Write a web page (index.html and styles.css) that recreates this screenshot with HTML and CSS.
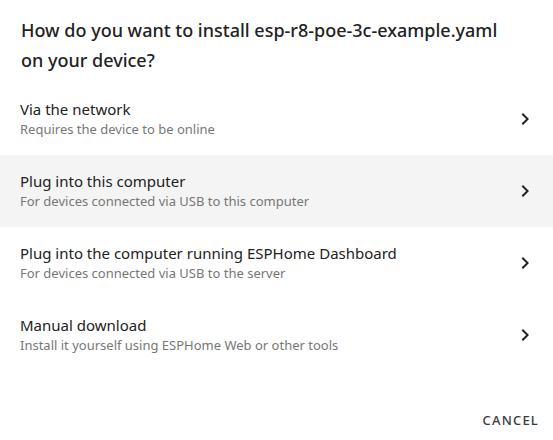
FILE: index.html
```html
<!DOCTYPE html>
<html>
<head>
<meta charset="utf-8">
<link rel="stylesheet" href="styles.css">
</head>
<body>
<div class="dialog">
  <h2 class="title">How do you want to install esp-r8-poe-3c-example.yaml on your device?</h2>
  <ul class="list">
    <li class="item">
      <div class="text">
        <span class="primary">Via the network</span>
        <span class="secondary">Requires the device to be online</span>
      </div>
      <svg class="chev" viewBox="0 0 24 24" width="24" height="24"><path d="M10 6L8.59 7.41 13.17 12l-4.58 4.59L10 18l6-6z"/></svg>
    </li>
    <li class="item hover">
      <div class="text">
        <span class="primary">Plug into this computer</span>
        <span class="secondary">For devices connected via USB to this computer</span>
      </div>
      <svg class="chev" viewBox="0 0 24 24" width="24" height="24"><path d="M10 6L8.59 7.41 13.17 12l-4.58 4.59L10 18l6-6z"/></svg>
    </li>
    <li class="item">
      <div class="text">
        <span class="primary">Plug into the computer running ESPHome Dashboard</span>
        <span class="secondary">For devices connected via USB to the server</span>
      </div>
      <svg class="chev" viewBox="0 0 24 24" width="24" height="24"><path d="M10 6L8.59 7.41 13.17 12l-4.58 4.59L10 18l6-6z"/></svg>
    </li>
    <li class="item">
      <div class="text">
        <span class="primary">Manual download</span>
        <span class="secondary">Install it yourself using ESPHome Web or other tools</span>
      </div>
      <svg class="chev" viewBox="0 0 24 24" width="24" height="24"><path d="M10 6L8.59 7.41 13.17 12l-4.58 4.59L10 18l6-6z"/></svg>
    </li>
  </ul>
  <div class="actions">
    <button class="btn">Cancel</button>
  </div>
</div>
</body>
</html>
```
FILE: styles.css
```css
html, body {
  margin: 0;
  padding: 0;
  background: #fff;
}
body {
  font-family: "Noto Sans", "Open Sans", sans-serif;
  color: rgba(0,0,0,0.87);
  width: 553px;
  height: 440px;
  overflow: hidden;
}
.dialog {
  display: flex;
  flex-direction: column;
}
.title {
  margin: 0;
  padding: 15px 40px 0 21px;
  font-size: 18px;
  line-height: 30px;
  font-weight: 500;
  color: #222;
}
.list {
  list-style: none;
  margin: 8px 0 0 0;
  padding: 0;
}
.item {
  height: 72px;
  display: flex;
  align-items: center;
  padding: 0 16px 0 20px;
}
.item.hover {
  background: #f4f4f4;
}
.text {
  flex: 1;
  display: flex;
  flex-direction: column;
}
.primary {
  font-size: 15px;
  line-height: 20px;
  color: #222;
}
.secondary {
  font-size: 13px;
  line-height: 20px;
  color: #777;
}
.chev {
  fill: #222;
  flex: none;
}
.actions {
  display: flex;
  justify-content: flex-end;
  padding: 31px 6px 0 0;
}
.btn {
  background: none;
  border: none;
  font-family: inherit;
  font-size: 13px;
  font-weight: 500;
  letter-spacing: 1.2px;
  text-transform: uppercase;
  color: #3a3a3a;
  padding: 0 8px;
  height: 36px;
}
```
